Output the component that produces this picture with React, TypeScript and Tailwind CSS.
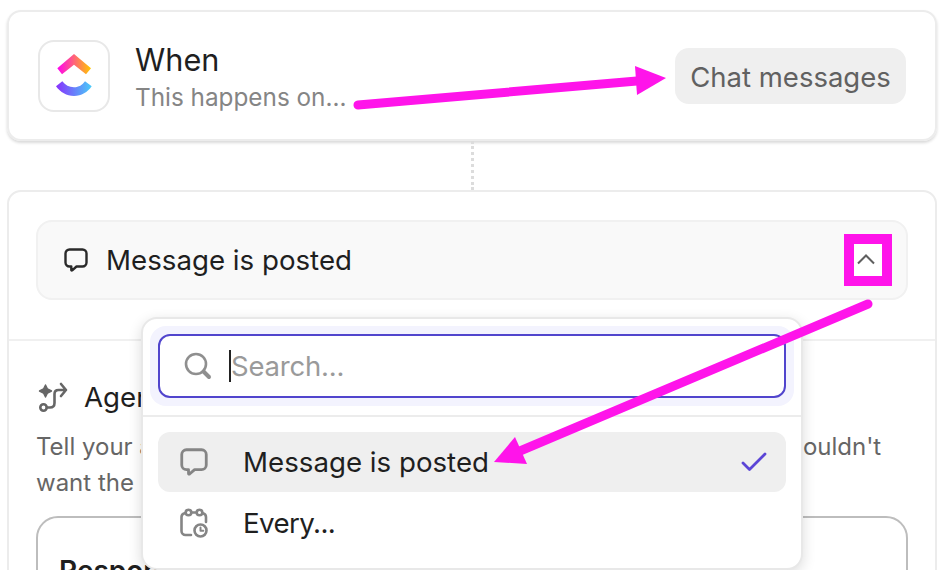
const sans = "font-['Inter',sans-serif]";

function ClickUpLogo() {
  return (
    <svg width="36" height="44" viewBox="0 0 36 44">
      <defs>
        <linearGradient id="cu-top" x1="0" y1="0" x2="1" y2="0">
          <stop offset="0" stopColor="#ff02f0" />
          <stop offset="1" stopColor="#ffc800" />
        </linearGradient>
        <linearGradient id="cu-bottom" x1="0" y1="0" x2="1" y2="0">
          <stop offset="0" stopColor="#8930fd" />
          <stop offset="1" stopColor="#49ccf9" />
        </linearGradient>
      </defs>
      <path d="M1.300 14.300 18 0l17 14.300-5 6-12-9.600-12 9.600z" fill="url(#cu-top)" />
      <path d="M0 32.300l6.300-5c3 3.800 6.800 6 11.700 6s8.400-2.200 11-6l6.700 5C31.500 38.300 25.500 42 18 42S4.500 38.300 0 32.300z" fill="url(#cu-bottom)" />
    </svg>
  );
}

function BubbleIcon({ size, className }: { size: number; className: string }) {
  return (
    <svg width={size} height={size} viewBox="0 0 24 24" fill="none" stroke="currentColor" strokeWidth="2.400" strokeLinejoin="round" className={className}>
      <path d="M5.500 1.500h13a4 4 0 0 1 4 4v9a4 4 0 0 1-4 4h-6l-4.300 3.800c-.4.3-.9.1-.9-.4v-3.400H5.500a4 4 0 0 1-4-4v-9a4 4 0 0 1 4-4z" />
    </svg>
  );
}

function AgentIcon() {
  return (
    <svg width="30" height="30" viewBox="0 0 30 30" fill="none" stroke="#666" strokeWidth="2.600" strokeLinecap="round" strokeLinejoin="round" className="ml-[2px] -mr-[2px]">
      <path d="M7.500 3 9.500 7 13.500 9 9.500 11 7.500 15 5.500 11 1.500 9 5.500 7z" fill="#666" strokeWidth="1.400" />
      <path d="M23 2l5 6-5 6M28 8h-7.500c-2.500 0-4 1.500-4 4v9c0 3-2 4.500-4.500 4.500H9" />
      <circle cx="5.500" cy="25.500" r="3.200" />
    </svg>
  );
}

function CalendarClockIcon() {
  return (
    <svg width="28" height="30" viewBox="0 0 28 30" fill="none" stroke="#858585" strokeWidth="2.600" strokeLinecap="round" strokeLinejoin="round">
      <path d="M11 27H5.500a4 4 0 0 1-4-4V9a4 4 0 0 1 3-3.800M12 4.500h4M23 5.200a4 4 0 0 1 3 3.800v5" />
      <circle cx="8.500" cy="4.500" r="2.800" />
      <circle cx="19.500" cy="4.500" r="2.800" />
      <circle cx="20.500" cy="22.500" r="6" />
      <path d="M20.500 19.500v3.200h2.800" strokeWidth="2" />
    </svg>
  );
}

export default function App() {
  return (
    <div className={`${sans} relative flex h-[570px] w-[950px] flex-col overflow-hidden bg-white pl-[7px] pr-[13px] pt-[10px] text-[#1f1f1f]`}>
      <div className="flex h-[131px] shrink-0 items-center justify-between rounded-[14px] border-2 border-[#ececec] pl-[29px] pr-[29px] pt-[1px] shadow-[0_2px_3px_rgba(0,0,0,0.15)]">
        <div className="flex items-center gap-[25px]">
          <div className="flex h-[72px] w-[72px] items-center justify-center rounded-[16px] border-2 border-[#e8e8e8]">
            <ClickUpLogo />
          </div>
          <div className="flex flex-col pt-[2px]">
            <span className="text-[30.700px] leading-[40px]">When</span>
            <span className="text-[24.300px] leading-[34px] text-[#858585]">This happens on...</span>
          </div>
        </div>
        <button className="h-[56px] w-[231px] rounded-[14px] bg-[#efefef] pt-[3px] text-[27.500px] text-[#616161]">Chat messages</button>
      </div>

      <div className="ml-[464px] h-[49px] w-0 shrink-0 border-l-[3px] border-dotted border-[#dcdcdc]" />

      <div className="flex h-[500px] shrink-0 flex-col rounded-[14px] border-2 border-[#ececec]">
        <div className="px-[27px] pt-[28px] pb-[39px]">
          <div className="flex h-[80px] items-center rounded-[16px] border-2 border-[#f1f1f1] bg-[#f9f9f9] pl-[26px] pr-[14px]">
            <BubbleIcon size={24} className="text-[#2a2a2a]" />
            <span className="ml-[18px] flex-1 pt-[2px] text-[27.700px]">Message is posted</span>
            <button className="flex h-[52px] w-[48px] items-center justify-center border-[10px] border-[#ff14ea] bg-white pr-[4px] pb-[2px]">
              <svg width="18" height="12" viewBox="0 0 18 12" fill="none" stroke="#5f5f5f" strokeWidth="2">
                <path d="M1 10.500 9 2.500 17 10.500" />
              </svg>
            </button>
          </div>
        </div>
        <div className="border-t-2 border-[#f0f0f0] px-[27px] pt-[40px]">
          <div className="flex items-center gap-[18px]">
            <AgentIcon />
            <span className="text-[27.700px] leading-[32px]">Agent</span>
          </div>
          <p className="mt-[16px] whitespace-nowrap text-[24px] leading-[36px] text-[#666]">
            Tell your agent when it should respond and any situations when it wouldn't
            <br />
            want the agent to respond
          </p>
          <div className="mt-[15px] h-[120px] rounded-[22px] border-2 border-[#bdbdbd] px-[21px] pt-[35px]">
            <span className="text-[28px] font-semibold leading-[36px]">Response</span>
          </div>
        </div>
      </div>

      {/* open dropdown */}
      <div className="absolute left-[141px] top-[317px] h-[253px] w-[662px] rounded-[16px] border-2 border-[#e8e8e8] bg-white shadow-[0_4px_14px_rgba(0,0,0,0.14)]">
        <div className="border-b-2 border-[#ececec] px-[7px] pt-[7px] pb-[9px]">
          <div className="rounded-[16px] bg-[#f3f3fe] p-[8px]">
            <div className="flex h-[64px] items-center rounded-[12px] border-2 border-[#5145cd] bg-white pl-[24px]">
              <svg width="28" height="28" viewBox="0 0 28 28" fill="none" stroke="#8f8f8f" strokeWidth="2.600" strokeLinecap="round">
                <circle cx="12" cy="12" r="10" />
                <path d="M19.500 19.500 25 25" strokeWidth="4" />
              </svg>
              <span className="ml-[17px] h-[32px] w-[2px] bg-[#222]" />
              <input placeholder="Search..." className="w-[400px] bg-transparent pt-[2px] text-[27.500px] tracking-[-0.2px] outline-none placeholder:text-[#9a9a9a]" />
            </div>
          </div>
        </div>
        <div className="px-[15px] pt-[15px]">
          <div className="flex h-[60px] items-center rounded-[12px] bg-[#efefef] pl-[22px] pr-[19px]">
            <BubbleIcon size={28} className="text-[#858585]" />
            <span className="ml-[35px] flex-1 pt-[2px] text-[27.700px]">Message is posted</span>
            <svg width="26" height="20" viewBox="0 0 26 20" fill="none" stroke="#5b45d6" strokeWidth="2.800" strokeLinecap="round" strokeLinejoin="round">
              <path d="M2 11l6.500 6.500L24 2" />
            </svg>
          </div>
          <div className="flex h-[62px] items-center pl-[22px]">
            <CalendarClockIcon />
            <span className="ml-[35px] pt-[2px] text-[27.700px] tracking-[-0.6px]">Every...</span>
          </div>
        </div>
      </div>

      {/* magenta annotation arrows */}
      <svg className="pointer-events-none absolute left-0 top-0" width="950" height="570" fill="#ff14ea" stroke="none">
        <path d="M358 105 637 81" stroke="#ff14ea" strokeWidth="9" strokeLinecap="round" />
        <path d="M666 78 635 66 637 95z" />
        <path d="M868 304 520 451" stroke="#ff14ea" strokeWidth="9" strokeLinecap="round" />
        <path d="M494 462 515 437 527 464z" />
      </svg>
    </div>
  );
}
